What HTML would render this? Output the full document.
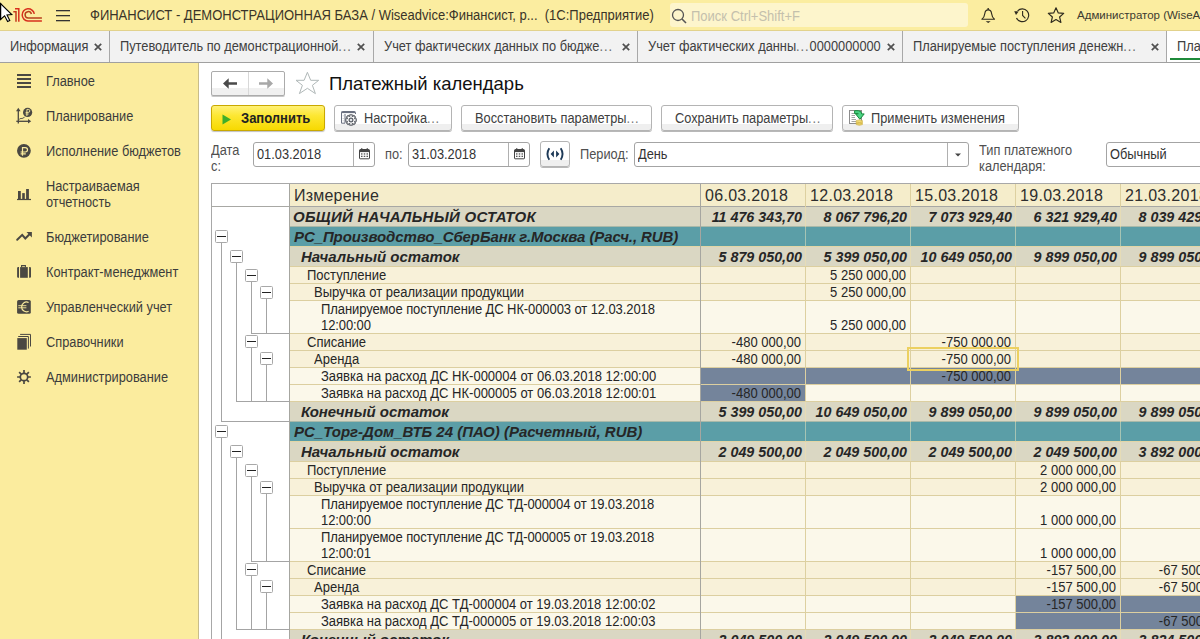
<!DOCTYPE html><html><head><meta charset="utf-8"><style>

*{margin:0;padding:0;box-sizing:border-box}
html,body{width:1200px;height:639px;overflow:hidden;background:#fff;font-family:"Liberation Sans",sans-serif;}
.a{position:absolute;white-space:nowrap}
#hdr{position:absolute;left:0;top:0;width:1200px;height:31px;background:#fbeda0;border-bottom:1px solid #e2d28c}
#tabs{position:absolute;left:0;top:31px;width:1200px;height:32px;background:#f2f2f2;border-bottom:1px solid #a0a0a0}
.tab{position:absolute;top:0;height:31px;border-right:1px solid #a8a8a8}
.tt{position:absolute;top:8px;font-size:13.8px;transform:scaleX(0.92754);transform-origin:0 0;line-height:16px;color:#404040;white-space:nowrap}
.tx{position:absolute;top:12px;width:8px;height:8px}
#side{position:absolute;left:0;top:63px;width:199px;height:576px;background:#fbec9e;border-right:1px solid #c8bc8a}
.si{position:absolute;left:46px;font-size:13.8px;transform:scaleX(0.92754);transform-origin:0 0;line-height:16px;color:#3c3c3c;white-space:nowrap}
.ic{position:absolute}
.btn{position:absolute;top:105px;height:26px;border:1px solid #b4b4b4;border-radius:3px;background:linear-gradient(#fff 0,#fff 18px,#efefef 18px,#efefef 100%);box-shadow:0 1px 0 #b8b8b8}
.bt{position:absolute;top:4px;font-size:13.8px;transform:scaleX(0.92754);transform-origin:0 0;line-height:16px;color:#404040;white-space:nowrap}
.inp{position:absolute;top:142px;height:25px;border:1px solid #a4a4a4;border-radius:3px;background:#fff}
.it{position:absolute;top:4px;left:3px;font-size:14px;transform:scaleX(0.92857);transform-origin:0 0;line-height:16px;color:#333;white-space:nowrap}
.lbl{position:absolute;font-size:13.8px;transform:scaleX(0.92754);transform-origin:0 0;line-height:16px;color:#505050;white-space:nowrap}
.row{position:absolute;left:290px;width:910px}
.lb{position:absolute;white-space:nowrap;color:#262626}
.num{position:absolute;text-align:right;white-space:nowrap;color:#262626}

</style></head><body>
<div id="hdr">
<svg class="a" style="left:0;top:0" width="14" height="24" viewBox="0 0 14 24"><path d="M0.5 3.5 L0.5 19.5 L4.6 15.8 L7.6 21.6 L9.8 20.6 L7 15 L11.8 14.6 Z" fill="#fff" stroke="#000" stroke-width="1.1" stroke-linejoin="miter"/><rect x="0" y="3" width="1.2" height="17" fill="#000"/></svg>
<svg class="a" style="left:10px;top:4px" width="36" height="22" viewBox="10 4 36 22"><path d="M13.3 11.8 L16 11.8 L16 21.7" fill="none" stroke="#c23a1c" stroke-width="1.5"/><path d="M15 8.8 L18.8 8.8 L18.8 21.7" fill="none" stroke="#d8301e" stroke-width="1.5"/><path d="M34.3 13.8 A6.1 6.1 0 1 0 27.9 21 L41.9 21" fill="none" stroke="#d8301e" stroke-width="1.5"/><path d="M31.4 14 A3.2 3.2 0 1 0 28.2 18 L41.9 18" fill="none" stroke="#b8401c" stroke-width="1.5"/></svg>
<svg class="a" style="left:56px;top:9px" width="15" height="13"><rect x="0" y="1" width="14" height="1.3" fill="#333"/><rect x="0" y="6" width="14" height="1.3" fill="#333"/><rect x="0" y="11" width="14" height="1.3" fill="#333"/></svg>
<div class="a" style="left:90px;top:7px;font-size:14px;transform:scaleX(0.92857);transform-origin:0 0;line-height:16px;color:#3a3428">ФИНАНСИСТ - ДЕМОНСТРАЦИОННАЯ БАЗА / Wiseadvice:Финансист, р...&nbsp; (1С:Предприятие)</div>
<div class="a" style="left:670px;top:3px;width:298px;height:24px;background:#fdf5cc;border-radius:3px"></div>
<svg class="a" style="left:671px;top:8px" width="17" height="16"><circle cx="7" cy="7" r="5.5" fill="none" stroke="#555" stroke-width="1.3"/><path d="M11 11 L15 15" stroke="#555" stroke-width="1.6"/></svg>
<div class="a" style="left:691px;top:8px;font-size:14px;transform:scaleX(0.92857);transform-origin:0 0;line-height:16px;color:#c4c0ac">Поиск Ctrl+Shift+F</div>
<svg class="a" style="left:0;top:0" width="1070" height="30" viewBox="0 0 1070 30"><circle cx="988.2" cy="8.9" r="0.9" fill="#2e2a1e"/><path d="M981.9 19.2 Q984.3 17.6 984.8 13.6 Q985.3 9.9 988.2 9.9 Q991.1 9.9 991.6 13.6 Q992.1 17.6 994.5 19.2 Z" fill="none" stroke="#2e2a1e" stroke-width="1.1" stroke-linejoin="round"/><path d="M985.7 21.2 L990.7 21.2 L988.2 22.9 Z" fill="#2e2a1e"/><path d="M1017.6 10.9 A6.4 6.4 0 1 1 1016.5 18" fill="none" stroke="#2e2a1e" stroke-width="1.15"/><path d="M1014.2 11.2 L1018.6 11.4 L1016 15 Z" fill="#2e2a1e"/><path d="M1022.6 10.9 L1022.6 15.5 L1025.4 18.3" fill="none" stroke="#2e2a1e" stroke-width="1.1"/><path d="M1056 7.8 L1058.3 12.9 L1063.7 13.4 L1059.6 17 L1060.9 22.4 L1056 19.5 L1051.1 22.4 L1052.4 17 L1048.3 13.4 L1053.7 12.9 Z" fill="none" stroke="#2e2a1e" stroke-width="1.15" stroke-linejoin="round"/></svg>
<div class="a" style="left:1077px;top:7px;font-size:11.5px;line-height:16px;color:#3c3a30">Администратор (WiseAdvice)</div>
</div>
<div id="tabs">
<div class="tab" style="left:0px;width:110px"></div>
<div class="tt" style="left:10px">Информация</div>
<svg class="tx" style="left:94px" width="8" height="8"><path d="M0.8 0.8 L7.2 7.2 M7.2 0.8 L0.8 7.2" stroke="#505050" stroke-width="1.7"/></svg>
<div class="tab" style="left:110px;width:264px"></div>
<div class="tt" style="left:120px">Путеводитель по демонстрационной<span style="letter-spacing:1px;color:#6a6a6a">...</span></div>
<svg class="tx" style="left:357px" width="8" height="8"><path d="M0.8 0.8 L7.2 7.2 M7.2 0.8 L0.8 7.2" stroke="#505050" stroke-width="1.7"/></svg>
<div class="tab" style="left:374px;width:264px"></div>
<div class="tt" style="left:384px">Учет фактических данных по бюдже<span style="letter-spacing:1px;color:#6a6a6a">...</span></div>
<svg class="tx" style="left:622px" width="8" height="8"><path d="M0.8 0.8 L7.2 7.2 M7.2 0.8 L0.8 7.2" stroke="#505050" stroke-width="1.7"/></svg>
<div class="tab" style="left:638px;width:265px"></div>
<div class="tt" style="left:648px">Учет фактических данны<span style="letter-spacing:1px;color:#6a6a6a">...</span>0000000000</div>
<svg class="tx" style="left:887px" width="8" height="8"><path d="M0.8 0.8 L7.2 7.2 M7.2 0.8 L0.8 7.2" stroke="#505050" stroke-width="1.7"/></svg>
<div class="tab" style="left:903px;width:264px"></div>
<div class="tt" style="left:913px">Планируемые поступления денежн<span style="letter-spacing:1px;color:#6a6a6a">...</span></div>
<svg class="tx" style="left:1151px" width="8" height="8"><path d="M0.8 0.8 L7.2 7.2 M7.2 0.8 L0.8 7.2" stroke="#505050" stroke-width="1.7"/></svg>
<div class="a" style="left:1167px;top:0;width:40px;height:31px;background:#fff"></div>
<div class="tt" style="left:1177px">Платежный календарь</div>
<div class="a" style="left:1170px;top:27px;width:40px;height:2px;background:#1e8a3a"></div>
</div>
<div id="side"></div>
<div class="si" style="top:74px">Главное</div>
<div class="si" style="top:109px">Планирование</div>
<div class="si" style="top:144px">Исполнение бюджетов</div>
<div class="si" style="top:179px">Настраиваемая<br>отчетность</div>
<div class="si" style="top:230px">Бюджетирование</div>
<div class="si" style="top:265px">Контракт-менеджмент</div>
<div class="si" style="top:300px">Управленческий учет</div>
<div class="si" style="top:335px">Справочники</div>
<div class="si" style="top:370px">Администрирование</div>
<svg class="ic" style="left:0;top:63px" width="199" height="576" viewBox="0 63 199 576">
<g fill="#4a4842">
<rect x="17" y="74" width="14" height="2"/><rect x="17" y="78" width="14" height="2"/><rect x="17" y="82" width="14" height="2"/><rect x="17" y="86" width="14" height="2"/>
</g>
<path d="M18.3 123.5 L18.3 110" stroke="#4a4842" stroke-width="1.3"/>
<path d="M16 111.2 L18.3 107.8 L20.6 111.2 Z" fill="#4a4842"/>
<path d="M16.3 121.3 L29 121.3" stroke="#4a4842" stroke-width="1.3"/>
<path d="M28 119 L31.2 121.3 L28 123.6 Z" fill="#4a4842"/>
<path d="M19.2 119.3 L21 118.3 L22 118.6 L24.6 117.2" fill="none" stroke="#4a4842" stroke-width="0.9"/>
<circle cx="27.6" cy="112.4" r="4.6" fill="#4a4842"/>
<path d="M26.9 116 L26.9 109.4 L28.3 109.4 A1.5 1.5 0 0 1 28.3 112.4 L25.6 112.4 M25.6 114 L28.6 114" fill="none" stroke="#fbec9e" stroke-width="0.9"/>
<circle cx="23.9" cy="150.8" r="6.9" fill="#4a4842"/>
<path d="M22.5 155.8 L22.5 147.6 L25.3 147.6 A2.2 2.2 0 0 1 25.3 152 L20.6 152 M20.6 153.8 L25.8 153.8" fill="none" stroke="#fbec9e" stroke-width="1.2"/>
<g fill="#4a4842">
<rect x="18" y="191" width="2.8" height="8.3"/><rect x="22.2" y="193.1" width="2.6" height="6.2"/><rect x="26.1" y="189" width="2.8" height="10.3"/><rect x="17" y="198.9" width="14" height="1.2"/>
</g>
<path d="M17.2 239.8 L22.2 234.9 L25.3 238.5 L29.5 234.3" fill="none" stroke="#4a4842" stroke-width="2" stroke-linecap="round" stroke-linejoin="miter"/>
<path d="M26.5 232 L31.9 232 L31.9 237.4 Z" fill="#4a4842"/>
<path d="M21.6 267.3 L21.6 265.6 L25.4 265.6 L25.4 267.3" fill="none" stroke="#4a4842" stroke-width="1.1"/>
<rect x="20.1" y="267.1" width="7.7" height="10.7" fill="#4a4842"/>
<path d="M19 267.1 L18.2 267.1 Q17.1 267.1 17.1 268.2 L17.1 276.7 Q17.1 277.8 18.2 277.8 L19 277.8 Z" fill="#4a4842"/>
<path d="M29.1 267.1 L29.9 267.1 Q31 267.1 31 268.2 L31 276.7 Q31 277.8 29.9 277.8 L29.1 277.8 Z" fill="#4a4842"/>
<rect x="17.1" y="299.9" width="13.7" height="13.9" rx="1.6" fill="#4a4842"/>
<path d="M28.6 302.6 A4.7 4.9 0 1 0 28.6 311.2" fill="none" stroke="#fbec9e" stroke-width="1.2"/>
<path d="M18.3 305.7 L26.4 305.7 M18.3 307.8 L26.4 307.8" stroke="#fbec9e" stroke-width="0.9"/>
<rect x="17.3" y="338.1" width="9.5" height="11.6" fill="#4a4842"/>
<path d="M18.2 336.5 L28.4 336.5 L28.4 348.6" fill="none" stroke="#4a4842" stroke-width="1"/>
<path d="M20.1 334.4 L30.5 334.4 L30.5 346.5" fill="none" stroke="#4a4842" stroke-width="1"/>
<circle cx="24" cy="377" r="3.7" fill="none" stroke="#4a4842" stroke-width="1.7"/>
<path d="M28.00 377.85 L30.90 377.85 L30.90 376.15 L28.00 376.15 Z M26.23 380.43 L28.28 382.48 L29.48 381.28 L27.43 379.23 Z M23.15 381.00 L23.15 383.90 L24.85 383.90 L24.85 381.00 Z M20.57 379.23 L18.52 381.28 L19.72 382.48 L21.77 380.43 Z M20.00 376.15 L17.10 376.15 L17.10 377.85 L20.00 377.85 Z M21.77 373.57 L19.72 371.52 L18.52 372.72 L20.57 374.77 Z M24.85 373.00 L24.85 370.10 L23.15 370.10 L23.15 373.00 Z M27.43 374.77 L29.48 372.72 L28.28 371.52 L26.23 373.57 Z" fill="#4a4842"/>
</svg>
<div class="a" style="left:211px;top:71px;width:74px;height:25px;border:1px solid #ababab;border-radius:2px;background:linear-gradient(#fff 0,#fff 16px,#f0f0f0 16px,#f0f0f0 100%);box-shadow:0 1px 0 #c8c8c8"></div>
<div class="a" style="left:248px;top:72px;width:1px;height:23px;background:#d8d8d8"></div>
<svg class="a" style="left:0;top:0" width="300" height="100" viewBox="0 0 300 100"><path d="M223 83.5 L228.7 78.2 L228.7 82.3 L237 82.3 L237 84.7 L228.7 84.7 L228.7 88.8 Z" fill="#4a4a4a"/><path d="M273 83.5 L267.3 78.2 L267.3 82.3 L259 82.3 L259 84.7 L267.3 84.7 L267.3 88.8 Z" fill="#a8a8a8"/></svg>
<svg class="a" style="left:0;top:0" width="330" height="100" viewBox="0 0 330 100"><path d="M307.4 72.3 L310.7 80.3 L318.7 80.3 L312.4 85.3 L315.4 93.6 L307.4 88.3 L299.4 93.6 L302.4 85.3 L296 80.3 L304.1 80.3 Z" fill="none" stroke="#b0b8b8" stroke-width="1"/></svg>
<div class="a" style="left:329px;top:73px;font-size:18.5px;line-height:22px;color:#111">Платежный календарь</div>
<div class="a" style="left:211px;top:105px;width:114px;height:26px;border:1px solid #c9a800;border-radius:3px;background:linear-gradient(#fff176 0,#fde733 40%,#f7d900 100%);box-shadow:0 1px 1px rgba(0,0,0,.25)"></div>
<svg class="a" style="left:222px;top:114px" width="10" height="11"><path d="M0.5 0.5 L9 5.5 L0.5 10.5 Z" fill="#3fae2a"/></svg>
<div class="a" style="left:241px;top:110px;font-size:14px;transform:scaleX(0.92857);transform-origin:0 0;line-height:16px;font-weight:bold;color:#222">Заполнить</div>
<div class="btn" style="left:334px;width:118px"></div>
<div class="bt" style="left:364px;top:111px">Настройка<span style="letter-spacing:0.8px;color:#777">...</span></div>
<div class="btn" style="left:461px;width:191px"></div>
<div class="bt" style="left:475px;top:111px">Восстановить параметры<span style="letter-spacing:0.8px;color:#777">...</span></div>
<div class="btn" style="left:661px;width:172px"></div>
<div class="bt" style="left:675px;top:111px">Сохранить параметры<span style="letter-spacing:0.8px;color:#777">...</span></div>
<div class="btn" style="left:842px;width:177px"></div>
<div class="bt" style="left:871px;top:111px">Применить изменения</div>
<svg class="a" style="left:0;top:0" width="1030" height="135" viewBox="0 0 1030 135">
<path d="M341.5 123.2 L341.5 112.5 Q341.5 111.5 342.5 111.5 L354.5 111.5 Q355.5 111.5 355.5 112.5 L355.5 114" fill="none" stroke="#6a7080" stroke-width="1"/>
<path d="M341.5 112.3 L355 112.3" stroke="#6a7080" stroke-width="1.6"/>
<path d="M345 114 L345 123.2 M341.5 123.2 L345 123.2" fill="none" stroke="#6a7080" stroke-width="1"/>
<path d="M343.2 115.5 L343.2 116.2 M343.2 118 L343.2 118.7 M343.2 120.5 L343.2 121.2" stroke="#8a909a" stroke-width="0.8"/>
<path d="M356.27 118.82 L356.27 121.18 L354.82 121.18 L354.54 121.87 L355.56 122.89 L353.89 124.56 L352.87 123.54 L352.18 123.82 L352.18 125.27 L349.82 125.27 L349.82 123.82 L349.13 123.54 L348.11 124.56 L346.44 122.89 L347.46 121.87 L347.18 121.18 L345.73 121.18 L345.73 118.82 L347.18 118.82 L347.46 118.13 L346.44 117.11 L348.11 115.44 L349.13 116.46 L349.82 116.18 L349.82 114.73 L352.18 114.73 L352.18 116.18 L352.87 116.46 L353.89 115.44 L355.56 117.11 L354.54 118.13 L354.82 118.82 Z" fill="#fff" stroke="#5a5e66" stroke-width="1.1" stroke-linejoin="round"/>
<circle cx="351" cy="120" r="1.9" fill="#e0e4e8" stroke="#5a5e66" stroke-width="1.2"/>
<rect x="849.5" y="110.5" width="12" height="13" fill="#fff" stroke="#8c8c8c" stroke-width="1"/>
<path d="M851.5 113.5 L855 113.5 M851.5 115.5 L855 115.5 M851.5 117.5 L855 117.5 M851.5 119.5 L856 119.5 M851.5 121.5 L856 121.5" stroke="#9a9a9a" stroke-width="0.9"/>
<path d="M854.6 110.7 L858.3 110.7 Q861.6 110.7 861.6 113.9 L864.2 113.9 L859.9 119.3 L855.6 113.9 L858.3 113.9 Q858.3 113.4 857.8 113.4 L854.6 113.4 Z" fill="#4cd486" stroke="#168a3c" stroke-width="1" stroke-linejoin="round"/>
<path d="M856.2 120.5 Q859.3 119.3 862.4 120.5 L862.4 124.6 Q859.3 126 856.2 124.6 Z" fill="#f4de78" stroke="#c9a93a" stroke-width="0.6"/>
<path d="M856.4 122 Q859.3 123 862.2 122 M856.4 123.5 Q859.3 124.5 862.2 123.5" fill="none" stroke="#c9a93a" stroke-width="0.7"/>
</svg>
<div class="lbl" style="left:211px;top:143px;line-height:16px">Дата<br>с:</div>
<div class="inp" style="left:253px;width:122px"></div>
<div class="a" style="left:353px;top:143px;width:1px;height:23px;background:#b0b0b0"></div>
<div class="a" style="left:257px;top:147px;font-size:13.8px;transform:scaleX(0.92754);transform-origin:0 0;line-height:16px;color:#333">01.03.2018</div>
<svg class="a" style="left:359px;top:148px" width="11" height="12" viewBox="0 0 11 12"><path d="M0.5 3 Q0.5 1.5 2 1.5 L9 1.5 Q10.5 1.5 10.5 3 L10.5 10.2 Q10.5 10.8 9.9 10.8 L1.1 10.8 Q0.5 10.8 0.5 10.2 Z" fill="#fff" stroke="#444" stroke-width="1"/><rect x="0.5" y="1.5" width="10" height="2.6" fill="#444"/><rect x="2" y="0.3" width="1.4" height="2" fill="#444"/><rect x="7.6" y="0.3" width="1.4" height="2" fill="#444"/><g fill="#555"><rect x="2" y="5.3" width="1.5" height="1.3"/><rect x="4.75" y="5.3" width="1.5" height="1.3"/><rect x="7.5" y="5.3" width="1.5" height="1.3"/><rect x="2" y="7.7" width="1.5" height="1.3"/><rect x="4.75" y="7.7" width="1.5" height="1.3"/><rect x="7.5" y="7.7" width="1.5" height="1.3"/></g></svg>
<div class="lbl" style="left:385px;top:147px">по:</div>
<div class="inp" style="left:408px;width:122px"></div>
<div class="a" style="left:508px;top:143px;width:1px;height:23px;background:#b0b0b0"></div>
<div class="a" style="left:412px;top:147px;font-size:13.8px;transform:scaleX(0.92754);transform-origin:0 0;line-height:16px;color:#333">31.03.2018</div>
<svg class="a" style="left:514px;top:148px" width="11" height="12" viewBox="0 0 11 12"><path d="M0.5 3 Q0.5 1.5 2 1.5 L9 1.5 Q10.5 1.5 10.5 3 L10.5 10.2 Q10.5 10.8 9.9 10.8 L1.1 10.8 Q0.5 10.8 0.5 10.2 Z" fill="#fff" stroke="#444" stroke-width="1"/><rect x="0.5" y="1.5" width="10" height="2.6" fill="#444"/><rect x="2" y="0.3" width="1.4" height="2" fill="#444"/><rect x="7.6" y="0.3" width="1.4" height="2" fill="#444"/><g fill="#555"><rect x="2" y="5.3" width="1.5" height="1.3"/><rect x="4.75" y="5.3" width="1.5" height="1.3"/><rect x="7.5" y="5.3" width="1.5" height="1.3"/><rect x="2" y="7.7" width="1.5" height="1.3"/><rect x="4.75" y="7.7" width="1.5" height="1.3"/><rect x="7.5" y="7.7" width="1.5" height="1.3"/></g></svg>
<div class="btn" style="left:540px;top:141px;width:30px;height:26px"></div>
<svg class="a" style="left:0;top:0" width="580" height="170" viewBox="0 0 580 170"><path d="M549.3 148.3 Q545.6 154 549.3 159.7" fill="none" stroke="#1e3a58" stroke-width="1.9"/><path d="M560.7 148.3 Q564.4 154 560.7 159.7" fill="none" stroke="#1e3a58" stroke-width="1.9"/><path d="M553.9 150.6 L550.6 154 L553.9 157.4 Z M556.1 150.6 L559.4 154 L556.1 157.4 Z" fill="#1e3a58"/></svg>
<div class="lbl" style="left:580px;top:147px">Период:</div>
<div class="inp" style="left:634px;width:335px"></div>
<div class="a" style="left:947px;top:143px;width:1px;height:23px;background:#b0b0b0"></div>
<div class="a" style="left:638px;top:147px;font-size:13.8px;transform:scaleX(0.92754);transform-origin:0 0;line-height:16px;color:#333">День</div>
<svg class="a" style="left:955px;top:153px" width="7" height="4"><path d="M0 0.5 L6 0.5 L3 3.5 Z" fill="#444"/></svg>
<div class="lbl" style="left:979px;top:143px">Тип платежного<br>календаря:</div>
<div class="inp" style="left:1106px;width:120px"></div>
<div class="a" style="left:1110px;top:147px;font-size:13.8px;transform:scaleX(0.92754);transform-origin:0 0;line-height:16px;color:#333">Обычный</div>
<div class="a" style="left:211px;top:183px;width:1000px;height:460px;border-top:1px solid #a8a8a8;border-left:1px solid #a8a8a8;background:#fff"></div>
<div class="a" style="left:290px;top:184px;width:910px;height:22px;background:#f5edcb"></div>
<div class="a" style="left:211px;top:206px;width:989px;height:1px;background:#a8a8a4"></div>
<div class="a" style="left:294px;top:185px;font-size:16px;line-height:22px;letter-spacing:0.2px;color:#2e2e2e">Измерение</div>

<div class="a" style="left:705px;top:185px;font-size:16px;line-height:22px;letter-spacing:0.3px;color:#2e2e2e">06.03.2018</div>

<div class="a" style="left:810px;top:185px;font-size:16px;line-height:22px;letter-spacing:0.3px;color:#2e2e2e">12.03.2018</div>

<div class="a" style="left:915px;top:185px;font-size:16px;line-height:22px;letter-spacing:0.3px;color:#2e2e2e">15.03.2018</div>

<div class="a" style="left:1020px;top:185px;font-size:16px;line-height:22px;letter-spacing:0.3px;color:#2e2e2e">19.03.2018</div>

<div class="a" style="left:1125px;top:185px;font-size:16px;line-height:22px;letter-spacing:0.3px;color:#2e2e2e">21.03.2018</div>
<div class="a" style="left:290px;top:207px;width:910px;height:19px;background:#dad7c3"></div>
<div class="a" style="left:290px;top:226px;width:910px;height:1px;background:#a9b9a9"></div>
<div class="lb" style="left:293px;top:207px;font-size:15px;line-height:19px;letter-spacing:0.27px;font-weight:bold;font-style:italic;">ОБЩИЙ НАЧАЛЬНЫЙ ОСТАТОК</div>
<div class="num" style="left:700px;width:102px;top:208px;font-size:14.3px;line-height:19px;font-weight:bold;font-style:italic;">11 476 343,70</div>
<div class="num" style="left:805px;width:102px;top:208px;font-size:14.3px;line-height:19px;font-weight:bold;font-style:italic;">8 067 796,20</div>
<div class="num" style="left:910px;width:102px;top:208px;font-size:14.3px;line-height:19px;font-weight:bold;font-style:italic;">7 073 929,40</div>
<div class="num" style="left:1015px;width:102px;top:208px;font-size:14.3px;line-height:19px;font-weight:bold;font-style:italic;">6 321 929,40</div>
<div class="num" style="left:1120px;width:102px;top:208px;font-size:14.3px;line-height:19px;font-weight:bold;font-style:italic;">8 039 429,40</div>
<div class="a" style="left:290px;top:227px;width:910px;height:19px;background:#5b9ea7"></div>
<div class="a" style="left:290px;top:246px;width:910px;height:1px;background:#e2d6a6"></div>
<div class="lb" style="left:294px;top:227px;font-size:15px;line-height:19px;letter-spacing:-0.09px;font-weight:bold;font-style:italic;">РС_Производство_СберБанк г.Москва (Расч., RUB)</div>
<div class="a" style="left:290px;top:247px;width:910px;height:19px;background:#dad7c3"></div>
<div class="a" style="left:290px;top:266px;width:910px;height:1px;background:#dccfa0"></div>
<div class="lb" style="left:301px;top:247px;font-size:15px;line-height:19px;letter-spacing:0px;font-weight:bold;font-style:italic;">Начальный остаток</div>
<div class="num" style="left:700px;width:102px;top:248px;font-size:14.3px;line-height:19px;font-weight:bold;font-style:italic;">5 879 050,00</div>
<div class="num" style="left:805px;width:102px;top:248px;font-size:14.3px;line-height:19px;font-weight:bold;font-style:italic;">5 399 050,00</div>
<div class="num" style="left:910px;width:102px;top:248px;font-size:14.3px;line-height:19px;font-weight:bold;font-style:italic;">10 649 050,00</div>
<div class="num" style="left:1015px;width:102px;top:248px;font-size:14.3px;line-height:19px;font-weight:bold;font-style:italic;">9 899 050,00</div>
<div class="num" style="left:1120px;width:102px;top:248px;font-size:14.3px;line-height:19px;font-weight:bold;font-style:italic;">9 899 050,00</div>
<div class="a" style="left:290px;top:267px;width:910px;height:16px;background:#f8f1d9"></div>
<div class="a" style="left:290px;top:283px;width:910px;height:1px;background:#dccfa0"></div>
<div class="lb" style="left:307px;top:267px;font-size:14px;line-height:16px;letter-spacing:0px;transform:scaleX(0.92857);transform-origin:0 0;">Поступление</div>
<div class="num" style="left:805px;width:101px;top:267px;font-size:14px;line-height:16px;transform:scaleX(0.92857);transform-origin:100% 0;">5 250 000,00</div>
<div class="a" style="left:290px;top:284px;width:910px;height:16px;background:#f8f1d9"></div>
<div class="a" style="left:290px;top:300px;width:910px;height:1px;background:#dccfa0"></div>
<div class="lb" style="left:314px;top:284px;font-size:14px;line-height:16px;letter-spacing:0px;transform:scaleX(0.92857);transform-origin:0 0;">Выручка от реализации продукции</div>
<div class="num" style="left:805px;width:101px;top:284px;font-size:14px;line-height:16px;transform:scaleX(0.92857);transform-origin:100% 0;">5 250 000,00</div>
<div class="a" style="left:290px;top:301px;width:910px;height:32px;background:#fbf8ea"></div>
<div class="a" style="left:290px;top:333px;width:910px;height:1px;background:#dccfa0"></div>
<div class="lb" style="left:321px;top:301px;font-size:14px;line-height:16px;letter-spacing:-0.1px;transform:scaleX(0.92857);transform-origin:0 0;">Планируемое поступление ДС НК-000003 от 12.03.2018<br>12:00:00</div>
<div class="num" style="left:805px;width:101px;top:317px;font-size:14px;line-height:16px;transform:scaleX(0.92857);transform-origin:100% 0;">5 250 000,00</div>
<div class="a" style="left:290px;top:334px;width:910px;height:16px;background:#f8f1d9"></div>
<div class="a" style="left:290px;top:350px;width:910px;height:1px;background:#dccfa0"></div>
<div class="lb" style="left:307px;top:334px;font-size:14px;line-height:16px;letter-spacing:0px;transform:scaleX(0.92857);transform-origin:0 0;">Списание</div>
<div class="num" style="left:700px;width:101px;top:334px;font-size:14px;line-height:16px;transform:scaleX(0.92857);transform-origin:100% 0;">-480 000,00</div>
<div class="num" style="left:910px;width:101px;top:334px;font-size:14px;line-height:16px;transform:scaleX(0.92857);transform-origin:100% 0;">-750 000,00</div>
<div class="a" style="left:290px;top:351px;width:910px;height:16px;background:#f8f1d9"></div>
<div class="a" style="left:290px;top:367px;width:910px;height:1px;background:#dccfa0"></div>
<div class="lb" style="left:314px;top:351px;font-size:14px;line-height:16px;letter-spacing:0px;transform:scaleX(0.92857);transform-origin:0 0;">Аренда</div>
<div class="num" style="left:700px;width:101px;top:351px;font-size:14px;line-height:16px;transform:scaleX(0.92857);transform-origin:100% 0;">-480 000,00</div>
<div class="num" style="left:910px;width:101px;top:351px;font-size:14px;line-height:16px;transform:scaleX(0.92857);transform-origin:100% 0;">-750 000,00</div>
<div class="a" style="left:290px;top:368px;width:910px;height:16px;background:#fbf8ea"></div>
<div class="a" style="left:290px;top:384px;width:910px;height:1px;background:#dccfa0"></div>
<div class="a" style="left:701px;top:368px;width:104px;height:16px;background:#74849b"></div>
<div class="a" style="left:806px;top:368px;width:104px;height:16px;background:#74849b"></div>
<div class="a" style="left:911px;top:368px;width:104px;height:16px;background:#74849b"></div>
<div class="a" style="left:1016px;top:368px;width:104px;height:16px;background:#74849b"></div>
<div class="a" style="left:1121px;top:368px;width:104px;height:16px;background:#74849b"></div>
<div class="lb" style="left:321px;top:368px;font-size:14px;line-height:16px;letter-spacing:0px;transform:scaleX(0.92857);transform-origin:0 0;">Заявка на расход ДС НК-000004 от 06.03.2018 12:00:00</div>
<div class="num" style="left:910px;width:101px;top:368px;font-size:14px;line-height:16px;transform:scaleX(0.92857);transform-origin:100% 0;">-750 000,00</div>
<div class="a" style="left:290px;top:385px;width:910px;height:16px;background:#fbf8ea"></div>
<div class="a" style="left:290px;top:401px;width:910px;height:1px;background:#dccfa0"></div>
<div class="a" style="left:701px;top:385px;width:104px;height:16px;background:#74849b"></div>
<div class="lb" style="left:321px;top:385px;font-size:14px;line-height:16px;letter-spacing:0px;transform:scaleX(0.92857);transform-origin:0 0;">Заявка на расход ДС НК-000005 от 06.03.2018 12:00:01</div>
<div class="num" style="left:700px;width:101px;top:385px;font-size:14px;line-height:16px;transform:scaleX(0.92857);transform-origin:100% 0;">-480 000,00</div>
<div class="a" style="left:290px;top:402px;width:910px;height:19px;background:#dad7c3"></div>
<div class="a" style="left:290px;top:421px;width:910px;height:1px;background:#a9b9a9"></div>
<div class="lb" style="left:301px;top:402px;font-size:15px;line-height:19px;letter-spacing:0px;font-weight:bold;font-style:italic;">Конечный остаток</div>
<div class="num" style="left:700px;width:102px;top:403px;font-size:14.3px;line-height:19px;font-weight:bold;font-style:italic;">5 399 050,00</div>
<div class="num" style="left:805px;width:102px;top:403px;font-size:14.3px;line-height:19px;font-weight:bold;font-style:italic;">10 649 050,00</div>
<div class="num" style="left:910px;width:102px;top:403px;font-size:14.3px;line-height:19px;font-weight:bold;font-style:italic;">9 899 050,00</div>
<div class="num" style="left:1015px;width:102px;top:403px;font-size:14.3px;line-height:19px;font-weight:bold;font-style:italic;">9 899 050,00</div>
<div class="num" style="left:1120px;width:102px;top:403px;font-size:14.3px;line-height:19px;font-weight:bold;font-style:italic;">9 899 050,00</div>
<div class="a" style="left:290px;top:422px;width:910px;height:19px;background:#5b9ea7"></div>
<div class="a" style="left:290px;top:441px;width:910px;height:1px;background:#e2d6a6"></div>
<div class="lb" style="left:294px;top:422px;font-size:15px;line-height:19px;letter-spacing:0px;font-weight:bold;font-style:italic;">РС_Торг-Дом_ВТБ 24 (ПАО) (Расчетный, RUB)</div>
<div class="a" style="left:290px;top:442px;width:910px;height:19px;background:#dad7c3"></div>
<div class="a" style="left:290px;top:461px;width:910px;height:1px;background:#dccfa0"></div>
<div class="lb" style="left:301px;top:442px;font-size:15px;line-height:19px;letter-spacing:0px;font-weight:bold;font-style:italic;">Начальный остаток</div>
<div class="num" style="left:700px;width:102px;top:443px;font-size:14.3px;line-height:19px;font-weight:bold;font-style:italic;">2 049 500,00</div>
<div class="num" style="left:805px;width:102px;top:443px;font-size:14.3px;line-height:19px;font-weight:bold;font-style:italic;">2 049 500,00</div>
<div class="num" style="left:910px;width:102px;top:443px;font-size:14.3px;line-height:19px;font-weight:bold;font-style:italic;">2 049 500,00</div>
<div class="num" style="left:1015px;width:102px;top:443px;font-size:14.3px;line-height:19px;font-weight:bold;font-style:italic;">2 049 500,00</div>
<div class="num" style="left:1120px;width:102px;top:443px;font-size:14.3px;line-height:19px;font-weight:bold;font-style:italic;">3 892 000,00</div>
<div class="a" style="left:290px;top:462px;width:910px;height:16px;background:#f8f1d9"></div>
<div class="a" style="left:290px;top:478px;width:910px;height:1px;background:#dccfa0"></div>
<div class="lb" style="left:307px;top:462px;font-size:14px;line-height:16px;letter-spacing:0px;transform:scaleX(0.92857);transform-origin:0 0;">Поступление</div>
<div class="num" style="left:1015px;width:101px;top:462px;font-size:14px;line-height:16px;transform:scaleX(0.92857);transform-origin:100% 0;">2 000 000,00</div>
<div class="a" style="left:290px;top:479px;width:910px;height:16px;background:#f8f1d9"></div>
<div class="a" style="left:290px;top:495px;width:910px;height:1px;background:#dccfa0"></div>
<div class="lb" style="left:314px;top:479px;font-size:14px;line-height:16px;letter-spacing:0px;transform:scaleX(0.92857);transform-origin:0 0;">Выручка от реализации продукции</div>
<div class="num" style="left:1015px;width:101px;top:479px;font-size:14px;line-height:16px;transform:scaleX(0.92857);transform-origin:100% 0;">2 000 000,00</div>
<div class="a" style="left:290px;top:496px;width:910px;height:32px;background:#fbf8ea"></div>
<div class="a" style="left:290px;top:528px;width:910px;height:1px;background:#dccfa0"></div>
<div class="lb" style="left:321px;top:496px;font-size:14px;line-height:16px;letter-spacing:-0.1px;transform:scaleX(0.92857);transform-origin:0 0;">Планируемое поступление ДС ТД-000004 от 19.03.2018<br>12:00:00</div>
<div class="num" style="left:1015px;width:101px;top:512px;font-size:14px;line-height:16px;transform:scaleX(0.92857);transform-origin:100% 0;">1 000 000,00</div>
<div class="a" style="left:290px;top:529px;width:910px;height:32px;background:#fbf8ea"></div>
<div class="a" style="left:290px;top:561px;width:910px;height:1px;background:#dccfa0"></div>
<div class="lb" style="left:321px;top:529px;font-size:14px;line-height:16px;letter-spacing:-0.1px;transform:scaleX(0.92857);transform-origin:0 0;">Планируемое поступление ДС ТД-000005 от 19.03.2018<br>12:00:01</div>
<div class="num" style="left:1015px;width:101px;top:545px;font-size:14px;line-height:16px;transform:scaleX(0.92857);transform-origin:100% 0;">1 000 000,00</div>
<div class="a" style="left:290px;top:562px;width:910px;height:16px;background:#f8f1d9"></div>
<div class="a" style="left:290px;top:578px;width:910px;height:1px;background:#dccfa0"></div>
<div class="lb" style="left:307px;top:562px;font-size:14px;line-height:16px;letter-spacing:0px;transform:scaleX(0.92857);transform-origin:0 0;">Списание</div>
<div class="num" style="left:1015px;width:101px;top:562px;font-size:14px;line-height:16px;transform:scaleX(0.92857);transform-origin:100% 0;">-157 500,00</div>
<div class="num" style="left:1120px;width:101px;top:562px;font-size:14px;line-height:16px;transform:scaleX(0.92857);transform-origin:100% 0;">-67 500,00</div>
<div class="a" style="left:290px;top:579px;width:910px;height:16px;background:#f8f1d9"></div>
<div class="a" style="left:290px;top:595px;width:910px;height:1px;background:#dccfa0"></div>
<div class="lb" style="left:314px;top:579px;font-size:14px;line-height:16px;letter-spacing:0px;transform:scaleX(0.92857);transform-origin:0 0;">Аренда</div>
<div class="num" style="left:1015px;width:101px;top:579px;font-size:14px;line-height:16px;transform:scaleX(0.92857);transform-origin:100% 0;">-157 500,00</div>
<div class="num" style="left:1120px;width:101px;top:579px;font-size:14px;line-height:16px;transform:scaleX(0.92857);transform-origin:100% 0;">-67 500,00</div>
<div class="a" style="left:290px;top:596px;width:910px;height:16px;background:#fbf8ea"></div>
<div class="a" style="left:290px;top:612px;width:910px;height:1px;background:#dccfa0"></div>
<div class="a" style="left:1016px;top:596px;width:104px;height:16px;background:#74849b"></div>
<div class="a" style="left:1121px;top:596px;width:104px;height:16px;background:#74849b"></div>
<div class="lb" style="left:321px;top:596px;font-size:14px;line-height:16px;letter-spacing:0px;transform:scaleX(0.92857);transform-origin:0 0;">Заявка на расход ДС ТД-000004 от 19.03.2018 12:00:02</div>
<div class="num" style="left:1015px;width:101px;top:596px;font-size:14px;line-height:16px;transform:scaleX(0.92857);transform-origin:100% 0;">-157 500,00</div>
<div class="a" style="left:290px;top:613px;width:910px;height:16px;background:#fbf8ea"></div>
<div class="a" style="left:290px;top:629px;width:910px;height:1px;background:#dccfa0"></div>
<div class="a" style="left:1016px;top:613px;width:104px;height:16px;background:#74849b"></div>
<div class="a" style="left:1121px;top:613px;width:104px;height:16px;background:#74849b"></div>
<div class="lb" style="left:321px;top:613px;font-size:14px;line-height:16px;letter-spacing:0px;transform:scaleX(0.92857);transform-origin:0 0;">Заявка на расход ДС ТД-000005 от 19.03.2018 12:00:03</div>
<div class="num" style="left:1120px;width:101px;top:613px;font-size:14px;line-height:16px;transform:scaleX(0.92857);transform-origin:100% 0;">-67 500,00</div>
<div class="a" style="left:290px;top:630px;width:910px;height:19px;background:#dad7c3"></div>
<div class="a" style="left:290px;top:649px;width:910px;height:1px;background:#dccfa0"></div>
<div class="lb" style="left:301px;top:630px;font-size:15px;line-height:19px;letter-spacing:0px;font-weight:bold;font-style:italic;">Конечный остаток</div>
<div class="num" style="left:700px;width:102px;top:631px;font-size:14.3px;line-height:19px;font-weight:bold;font-style:italic;">2 049 500,00</div>
<div class="num" style="left:805px;width:102px;top:631px;font-size:14.3px;line-height:19px;font-weight:bold;font-style:italic;">2 049 500,00</div>
<div class="num" style="left:910px;width:102px;top:631px;font-size:14.3px;line-height:19px;font-weight:bold;font-style:italic;">2 049 500,00</div>
<div class="num" style="left:1015px;width:102px;top:631px;font-size:14.3px;line-height:19px;font-weight:bold;font-style:italic;">3 892 000,00</div>
<div class="num" style="left:1120px;width:102px;top:631px;font-size:14.3px;line-height:19px;font-weight:bold;font-style:italic;">3 824 500,00</div>
<div class="a" style="left:289px;top:184px;width:1px;height:455px;background:#a6a6a0"></div>
<div class="a" style="left:700px;top:184px;width:1px;height:455px;background:#a6a6a0"></div>
<div class="a" style="left:805px;top:184px;width:1px;height:455px;background:#ddd0a0"></div>
<div class="a" style="left:805px;top:207px;width:1px;height:19px;background:#e6dcb6"></div>
<div class="a" style="left:805px;top:227px;width:1px;height:19px;background:#a6c4b4"></div>
<div class="a" style="left:805px;top:247px;width:1px;height:19px;background:#e6dcb6"></div>
<div class="a" style="left:805px;top:402px;width:1px;height:19px;background:#e6dcb6"></div>
<div class="a" style="left:805px;top:422px;width:1px;height:19px;background:#a6c4b4"></div>
<div class="a" style="left:805px;top:442px;width:1px;height:19px;background:#e6dcb6"></div>
<div class="a" style="left:805px;top:630px;width:1px;height:19px;background:#e6dcb6"></div>
<div class="a" style="left:910px;top:184px;width:1px;height:455px;background:#ddd0a0"></div>
<div class="a" style="left:910px;top:207px;width:1px;height:19px;background:#e6dcb6"></div>
<div class="a" style="left:910px;top:227px;width:1px;height:19px;background:#a6c4b4"></div>
<div class="a" style="left:910px;top:247px;width:1px;height:19px;background:#e6dcb6"></div>
<div class="a" style="left:910px;top:402px;width:1px;height:19px;background:#e6dcb6"></div>
<div class="a" style="left:910px;top:422px;width:1px;height:19px;background:#a6c4b4"></div>
<div class="a" style="left:910px;top:442px;width:1px;height:19px;background:#e6dcb6"></div>
<div class="a" style="left:910px;top:630px;width:1px;height:19px;background:#e6dcb6"></div>
<div class="a" style="left:1015px;top:184px;width:1px;height:455px;background:#ddd0a0"></div>
<div class="a" style="left:1015px;top:207px;width:1px;height:19px;background:#e6dcb6"></div>
<div class="a" style="left:1015px;top:227px;width:1px;height:19px;background:#a6c4b4"></div>
<div class="a" style="left:1015px;top:247px;width:1px;height:19px;background:#e6dcb6"></div>
<div class="a" style="left:1015px;top:402px;width:1px;height:19px;background:#e6dcb6"></div>
<div class="a" style="left:1015px;top:422px;width:1px;height:19px;background:#a6c4b4"></div>
<div class="a" style="left:1015px;top:442px;width:1px;height:19px;background:#e6dcb6"></div>
<div class="a" style="left:1015px;top:630px;width:1px;height:19px;background:#e6dcb6"></div>
<div class="a" style="left:1120px;top:184px;width:1px;height:455px;background:#ddd0a0"></div>
<div class="a" style="left:1120px;top:207px;width:1px;height:19px;background:#e6dcb6"></div>
<div class="a" style="left:1120px;top:227px;width:1px;height:19px;background:#a6c4b4"></div>
<div class="a" style="left:1120px;top:247px;width:1px;height:19px;background:#e6dcb6"></div>
<div class="a" style="left:1120px;top:402px;width:1px;height:19px;background:#e6dcb6"></div>
<div class="a" style="left:1120px;top:422px;width:1px;height:19px;background:#a6c4b4"></div>
<div class="a" style="left:1120px;top:442px;width:1px;height:19px;background:#e6dcb6"></div>
<div class="a" style="left:1120px;top:630px;width:1px;height:19px;background:#e6dcb6"></div>
<div class="a" style="left:907px;top:347px;width:112px;height:24px;border:2px solid #ecd060"></div>
<div class="a" style="left:221px;top:243px;width:1px;height:179px;background:#a4a4a4"></div>
<div class="a" style="left:221px;top:421px;width:68px;height:1px;background:#a4a4a4"></div>
<div class="a" style="left:236px;top:263px;width:1px;height:139px;background:#a4a4a4"></div>
<div class="a" style="left:236px;top:401px;width:53px;height:1px;background:#a4a4a4"></div>
<div class="a" style="left:251px;top:282px;width:1px;height:52px;background:#a4a4a4"></div>
<div class="a" style="left:251px;top:333px;width:38px;height:1px;background:#a4a4a4"></div>
<div class="a" style="left:266px;top:299px;width:1px;height:35px;background:#a4a4a4"></div>
<div class="a" style="left:251px;top:348px;width:1px;height:54px;background:#a4a4a4"></div>
<div class="a" style="left:266px;top:365px;width:1px;height:37px;background:#a4a4a4"></div>
<div class="a" style="left:215px;top:230px;width:13px;height:13px;border:1px solid #a8a8a8;border-radius:1.5px;background:#fff"></div>
<div class="a" style="left:217px;top:236px;width:9px;height:1px;background:#222"></div>
<div class="a" style="left:230px;top:250px;width:13px;height:13px;border:1px solid #a8a8a8;border-radius:1.5px;background:#fff"></div>
<div class="a" style="left:232px;top:256px;width:9px;height:1px;background:#222"></div>
<div class="a" style="left:245px;top:269px;width:13px;height:13px;border:1px solid #a8a8a8;border-radius:1.5px;background:#fff"></div>
<div class="a" style="left:247px;top:275px;width:9px;height:1px;background:#222"></div>
<div class="a" style="left:260px;top:286px;width:13px;height:13px;border:1px solid #a8a8a8;border-radius:1.5px;background:#fff"></div>
<div class="a" style="left:262px;top:292px;width:9px;height:1px;background:#222"></div>
<div class="a" style="left:245px;top:335px;width:13px;height:13px;border:1px solid #a8a8a8;border-radius:1.5px;background:#fff"></div>
<div class="a" style="left:247px;top:341px;width:9px;height:1px;background:#222"></div>
<div class="a" style="left:260px;top:352px;width:13px;height:13px;border:1px solid #a8a8a8;border-radius:1.5px;background:#fff"></div>
<div class="a" style="left:262px;top:358px;width:9px;height:1px;background:#222"></div>
<div class="a" style="left:221px;top:438px;width:1px;height:201px;background:#a4a4a4"></div>
<div class="a" style="left:236px;top:458px;width:1px;height:172px;background:#a4a4a4"></div>
<div class="a" style="left:236px;top:629px;width:53px;height:1px;background:#a4a4a4"></div>
<div class="a" style="left:251px;top:477px;width:1px;height:85px;background:#a4a4a4"></div>
<div class="a" style="left:251px;top:561px;width:38px;height:1px;background:#a4a4a4"></div>
<div class="a" style="left:266px;top:494px;width:1px;height:68px;background:#a4a4a4"></div>
<div class="a" style="left:251px;top:576px;width:1px;height:54px;background:#a4a4a4"></div>
<div class="a" style="left:266px;top:593px;width:1px;height:37px;background:#a4a4a4"></div>
<div class="a" style="left:215px;top:425px;width:13px;height:13px;border:1px solid #a8a8a8;border-radius:1.5px;background:#fff"></div>
<div class="a" style="left:217px;top:431px;width:9px;height:1px;background:#222"></div>
<div class="a" style="left:230px;top:445px;width:13px;height:13px;border:1px solid #a8a8a8;border-radius:1.5px;background:#fff"></div>
<div class="a" style="left:232px;top:451px;width:9px;height:1px;background:#222"></div>
<div class="a" style="left:245px;top:464px;width:13px;height:13px;border:1px solid #a8a8a8;border-radius:1.5px;background:#fff"></div>
<div class="a" style="left:247px;top:470px;width:9px;height:1px;background:#222"></div>
<div class="a" style="left:260px;top:481px;width:13px;height:13px;border:1px solid #a8a8a8;border-radius:1.5px;background:#fff"></div>
<div class="a" style="left:262px;top:487px;width:9px;height:1px;background:#222"></div>
<div class="a" style="left:245px;top:563px;width:13px;height:13px;border:1px solid #a8a8a8;border-radius:1.5px;background:#fff"></div>
<div class="a" style="left:247px;top:569px;width:9px;height:1px;background:#222"></div>
<div class="a" style="left:260px;top:580px;width:13px;height:13px;border:1px solid #a8a8a8;border-radius:1.5px;background:#fff"></div>
<div class="a" style="left:262px;top:586px;width:9px;height:1px;background:#222"></div>
</body></html>
